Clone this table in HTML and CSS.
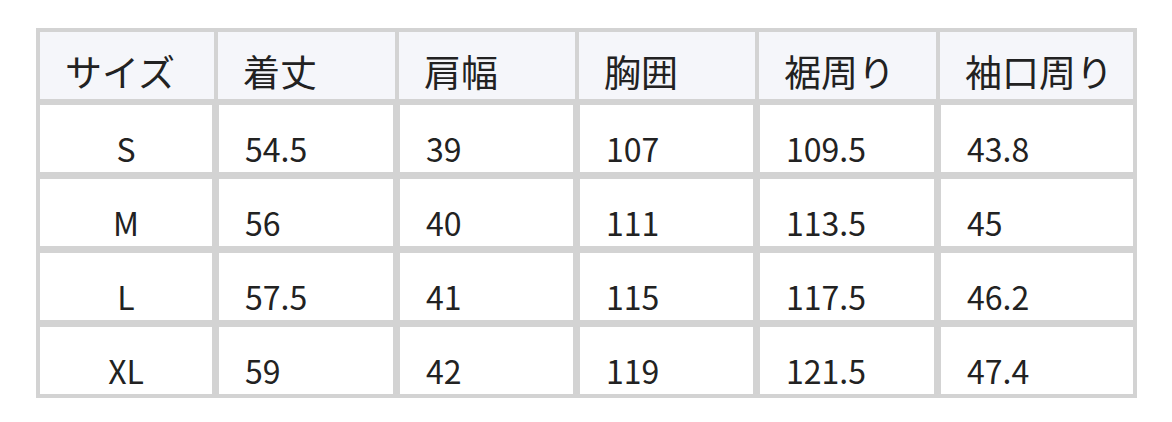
FILE: index.html
```html
<!DOCTYPE html>
<html lang="ja">
<head>
<meta charset="utf-8">
<title>サイズ表</title>
<link rel="stylesheet" href="styles.css">
</head>
<body>
<table class="size-table">
  <colgroup>
    <col class="c1"><col class="c2"><col class="c3"><col class="c4"><col class="c5"><col class="c6">
  </colgroup>
  <thead>
    <tr class="head-row">
      <th>サイズ</th><th>着丈</th><th>肩幅</th><th>胸囲</th><th>裾周り</th><th>袖口周り</th>
    </tr>
  </thead>
  <tbody>
    <tr class="body-row"><td>S</td><td>54.5</td><td>39</td><td>107</td><td>109.5</td><td>43.8</td></tr>
    <tr class="body-row"><td>M</td><td>56</td><td>40</td><td>111</td><td>113.5</td><td>45</td></tr>
    <tr class="body-row"><td>L</td><td>57.5</td><td>41</td><td>115</td><td>117.5</td><td>46.2</td></tr>
    <tr class="body-row last"><td>XL</td><td>59</td><td>42</td><td>119</td><td>121.5</td><td>47.4</td></tr>
  </tbody>
</table>
</body>
</html>
```
FILE: styles.css
```css
body {
  margin: 28px 0 0 36px;
  background: #ffffff;
  color: #222222;
  font-family: "Noto Sans CJK JP", "Noto Sans", sans-serif;
}

.size-table {
  border-collapse: separate;
  border-spacing: 0;
  border: 4px solid #d3d3d3;
  table-layout: fixed;
  width: 1101px;
  font-size: 32px;
  line-height: 48px;
}

.c1 { width: 178px; }
.c2 { width: 181px; }
.c3 { width: 180px; }
.c4 { width: 180px; }
.c5 { width: 181px; }
.c6 { width: 193px; }

.head-row { height: 73px; }
.body-row { height: 73px; }
.body-row.last { height: 67px; }

.size-table th,
.size-table td {
  padding: 19px 0 0 26px;
  vertical-align: top;
  text-align: left;
  font-weight: 400;
  white-space: nowrap;
}

.size-table th {
  padding: 15px 0 0 25px;
  font-size: 37px;
  background: #f5f6fa;
  border-right: 4px solid #d3d3d3;
  border-bottom: 6px solid #d3d3d3;
}

.size-table th:last-child { border-right: 0; }

.size-table td {
  background: #ffffff;
  border-right: 6px solid #d3d3d3;
}

.size-table td + td { border-left: 1px solid #d3d3d3; }
.size-table td:last-child { border-right: 0; }

.size-table td:first-child {
  text-align: center;
  padding-left: 0;
}

.body-row:not(.last) td { border-bottom: 7px solid #d3d3d3; }
```
